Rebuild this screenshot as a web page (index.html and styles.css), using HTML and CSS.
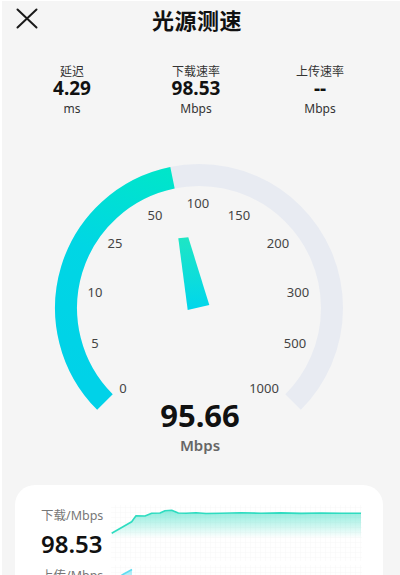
FILE: index.html
```html
<!DOCTYPE html>
<html lang="zh-CN">
<head>
    <meta charset="UTF-8">
    <meta name="viewport" content="width=device-width, initial-scale=1.0">
    <title>光源测速</title>
    <link rel="stylesheet" href="styles.css">
</head>
<body>
<div class="screen">
    <header class="topbar">
        <svg class="close-btn" viewBox="0 0 22 21">
            <path d="M1.5 1.5 L20.5 19.5 M20.5 1.5 L1.5 19.5" stroke="#1a1a1a" stroke-width="2" stroke-linecap="round" fill="none"/>
        </svg>
        <h1 class="title">光源测速</h1>
        <span></span>
    </header>

    <div class="stats">
        <div class="stat">
            <div class="stat-label">延迟</div>
            <div class="stat-value">4.29</div>
            <div class="stat-unit">ms</div>
        </div>
        <div class="stat">
            <div class="stat-label">下载速率</div>
            <div class="stat-value">98.53</div>
            <div class="stat-unit">Mbps</div>
        </div>
        <div class="stat">
            <div class="stat-label">上传速率</div>
            <div class="stat-value">--</div>
            <div class="stat-unit">Mbps</div>
        </div>
    </div>

    <div class="gauge">
        <svg class="gauge-svg" viewBox="0 0 400 260">
            <defs>
                <linearGradient id="arcFill" gradientUnits="userSpaceOnUse" x1="100" y1="230" x2="175" y2="15">
                    <stop offset="0" stop-color="#00d2e8"/>
                    <stop offset="0.55" stop-color="#00d6e4"/>
                    <stop offset="1" stop-color="#00e6c9"/>
                </linearGradient>
                <linearGradient id="needleFill" gradientUnits="userSpaceOnUse" x1="0" y1="82" x2="0" y2="155">
                    <stop offset="0" stop-color="#1ee6c4"/>
                    <stop offset="1" stop-color="#00d6ec"/>
                </linearGradient>
            </defs>
            <path d="M104.95 247.05 A133 133 0 1 1 293.05 247.05" stroke="#e8ebf2" stroke-width="22" fill="none"/>
            <path d="M104.95 247.05 A133 133 0 0 1 172.5 22.7" stroke="url(#arcFill)" stroke-width="22" fill="none"/>
            <g class="scale">
                <text x="123" y="233">0</text>
                <text x="95" y="188">5</text>
                <text x="95" y="137">10</text>
                <text x="115" y="88">25</text>
                <text x="155" y="60">50</text>
                <text x="198" y="48">100</text>
                <text x="239" y="60">150</text>
                <text x="278" y="88">200</text>
                <text x="298" y="137">300</text>
                <text x="295" y="188">500</text>
                <text x="264" y="233">1000</text>
            </g>
            <polygon points="178.3,83.3 188.3,82.3 209.3,150 187.7,155" fill="url(#needleFill)"/>
        </svg>
        <div class="readout-value">95.66</div>
        <div class="readout-unit">Mbps</div>
    </div>

    <section class="card">
        <div class="speed-row">
            <div class="row-info">
                <div class="row-label">下载/Mbps</div>
                <div class="row-value">98.53</div>
            </div>
            <svg class="chart" viewBox="0 0 251 58">
                <defs>
                    <pattern id="grid1" width="5" height="5" patternUnits="userSpaceOnUse">
                        <path d="M5 0 L5 5 L0 5" stroke="#f1f4f4" stroke-width="0.6" fill="none"/>
                    </pattern>
                    <linearGradient id="areaDown" x1="0" y1="0" x2="0" y2="1">
                        <stop offset="0" stop-color="#2edcc0" stop-opacity="0.55"/>
                        <stop offset="0.55" stop-color="#2edcc0" stop-opacity="0"/>
                    </linearGradient>
                </defs>
                <rect x="0" y="2" width="251" height="56" fill="url(#grid1)"/>
                <path d="M0.7 30.3 L20.7 18.7 L25 12.7 L34 13 L40.7 10.3 L49 10 L54 7.7 L60.7 7.3 L67.3 10 L75 10.3 L85 9.8 L95 10.5 L110 10.2 L130 9.8 L150 10.3 L170 9.9 L190 10.4 L210 10 L230 10.3 L250 10.2 L250 58 L0.7 58 Z" fill="url(#areaDown)"/>
                <polyline points="0.7,30.3 20.7,18.7 25,12.7 34,13 40.7,10.3 49,10 54,7.7 60.7,7.3 67.3,10 75,10.3 85,9.8 95,10.5 110,10.2 130,9.8 150,10.3 170,9.9 190,10.4 210,10 230,10.3 250,10.2" stroke="#2edcc0" stroke-width="1.6" fill="none" stroke-linejoin="round"/>
            </svg>
        </div>
        <div class="speed-row">
            <div class="row-info">
                <div class="row-label">上传/Mbps</div>
                <div class="row-value">--</div>
            </div>
            <svg class="chart" viewBox="0 0 251 58">
                <defs>
                    <pattern id="grid2" width="5" height="5" patternUnits="userSpaceOnUse">
                        <path d="M5 0 L5 5 L0 5" stroke="#f1f4f4" stroke-width="0.6" fill="none"/>
                    </pattern>
                    <linearGradient id="areaUp" x1="0" y1="0" x2="0" y2="1">
                        <stop offset="0" stop-color="#5fdcf0" stop-opacity="0.55"/>
                        <stop offset="0.55" stop-color="#5fdcf0" stop-opacity="0"/>
                    </linearGradient>
                </defs>
                <rect x="0" y="2" width="251" height="56" fill="url(#grid2)"/>
                <path d="M0 30 L11 12 L21 6.5 L21 58 L0 58 Z" fill="url(#areaUp)"/>
                <polyline points="0,30 11,12 21,6.5" stroke="#5fdcf0" stroke-width="1.6" fill="none" stroke-linejoin="round"/>
            </svg>
        </div>
    </section>
</div>
</body>
</html>
```

FILE: styles.css
```css
* {
    box-sizing: border-box;
}
body {
    margin: 0;
    background: #f5f5f5;
    font-family: "Noto Sans", "Noto Sans CJK SC", sans-serif;
    color: #111;
}
.screen {
    height: 100vh;
    overflow: hidden;
    box-shadow: inset 2px 1px 0 #fff;
}
.topbar {
    display: grid;
    grid-template-columns: 54px 1fr 60px;
    height: 40px;
}
.close-btn {
    width: 22px;
    height: 21px;
    margin: 8px 0 0 16px;
}
.title {
    margin: 0;
    font-size: 22px;
    line-height: 40px;
    font-weight: 700;
    text-align: center;
    letter-spacing: 0.5px;
}
.stats {
    display: grid;
    grid-template-columns: repeat(3, 1fr);
    padding: 24px 18px 0 10px;
    text-align: center;
}
.stat-label,
.stat-unit {
    font-size: 12px;
    line-height: 15px;
    color: #333;
}
.stat-value {
    margin-top: 1px;
    font-size: 19px;
    line-height: 16px;
    font-weight: 700;
}
.stat-unit {
    margin-top: 5px;
}
.gauge {
    margin-top: 39px;
    text-align: center;
}
.gauge-svg {
    display: block;
    width: 400px;
    height: 260px;
}
.scale text {
    font-size: 13px;
    fill: #444;
    text-anchor: middle;
    dominant-baseline: central;
}
.readout-value {
    margin-top: -20px;
    font-size: 31px;
    line-height: 40px;
    font-weight: 700;
}
.readout-unit {
    font-size: 15px;
    line-height: 20px;
    font-weight: 600;
    color: #666;
}
.card {
    margin: 30px 17px 0 15px;
    padding: 18px 21px 0 26px;
    background: #fff;
    border-radius: 20px;
}
.speed-row {
    display: grid;
    grid-template-columns: 70px 1fr;
    height: 60px;
}
.row-info {
    padding-top: 5px;
}
.row-label {
    font-size: 12.5px;
    line-height: 16px;
    color: #777;
}
.row-value {
    margin-top: 6px;
    font-size: 24px;
    line-height: 28px;
    font-weight: 600;
}
.chart {
    display: block;
    width: 251px;
    height: 58px;
}
```
